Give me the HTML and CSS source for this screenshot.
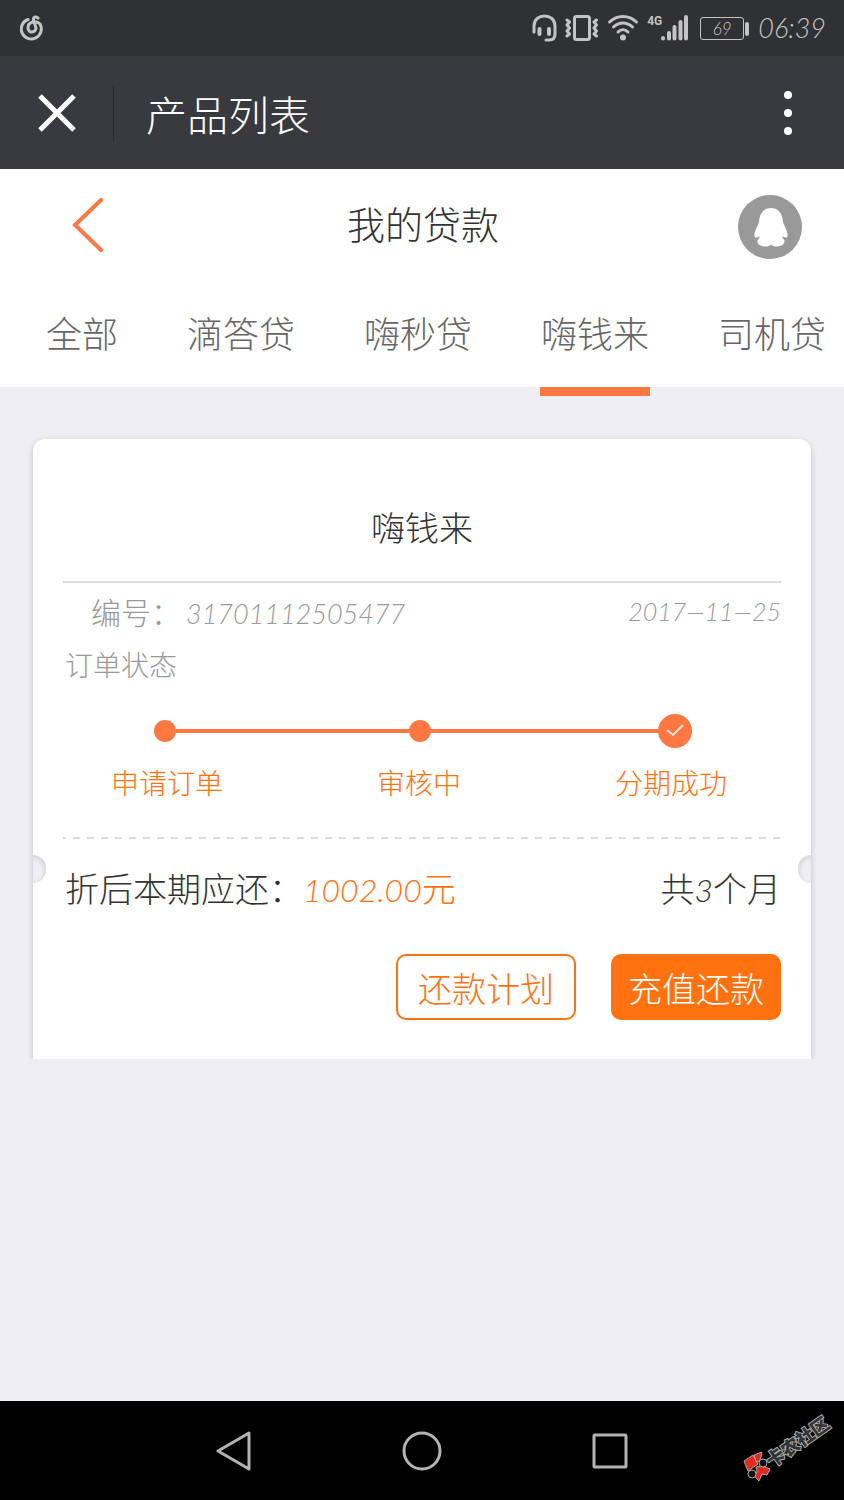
FILE: index.html
```html
<!DOCTYPE html>
<html lang="zh-CN">
<head>
    <meta charset="UTF-8">
    <meta name="viewport" content="width=device-width, initial-scale=1.0">
    <title>产品列表</title>
    <link rel="stylesheet" href="styles.css">
</head>
<body>
    <div class="status-bar">
        <svg class="music" width="24" height="26" viewBox="0 0 24 26" fill="none" stroke="#c4c4c4" stroke-width="3" stroke-linecap="round">
            <path d="M8 4.500A10 10 0 1 0 20 9C17 5.500 8 6 8 13C8 18.500 16 18 16 13L13.500 5C13 2 15.500 1 18 3"/>
        </svg>
        <div class="status-icons">
            <svg width="25" height="28" viewBox="0 0 25 28" fill="none" stroke="#c4c4c4" stroke-linecap="round">
                <path d="M2 18V12C2 -1.500 23 -1.500 23 12V20C23 24 21 26 17 26H14" stroke-width="3"/>
                <path d="M7.500 15V20M17 15V20" stroke-width="4"/>
            </svg>
            <svg width="34" height="28" viewBox="0 0 34 28" fill="none" stroke="#c4c4c4" stroke-linejoin="round" stroke-linecap="round">
                <rect x="9.500" y="2.500" width="15" height="23" rx="2" stroke-width="3"/>
                <path d="M2 6L4.500 8L2 11L4.500 14L2 17L4.500 20L2 22M31.500 6L29 8L31.500 11L29 14L31.500 17L29 20L31.500 22" stroke-width="3"/>
            </svg>
            <svg width="32" height="28" viewBox="0 0 32 28" fill="none" stroke="#c4c4c4" stroke-width="3" stroke-linecap="round">
                <path d="M2.500 8C10 0.500 22 0.500 29.500 8M6.500 13C12 7.500 20 7.500 25.500 13M11 18C14 15 18 15 21 18"/>
                <circle cx="16" cy="23.500" r="3" fill="#c4c4c4" stroke="none"/>
            </svg>
            <div class="signal">
                <span class="network">4G</span>
                <svg width="27" height="28" viewBox="0 0 27 28" stroke="#c4c4c4" stroke-width="4" stroke-linecap="round">
                    <path d="M2 24V24.500M8 19V24.500M13.500 13V24.500M19.500 8V24.500M25 3V24.500"/>
                </svg>
            </div>
            <div class="battery"><span class="battery-level">69</span></div>
            <time class="clock">06:39</time>
        </div>
    </div>

    <div class="app-bar">
        <button class="icon-btn close" aria-label="关闭">
            <svg width="38" height="38" viewBox="0 0 38 38" stroke="#fff" stroke-width="5"><path d="M2 2L36 36M36 2L2 36"/></svg>
        </button>
        <span class="app-title">产品列表</span>
        <button class="icon-btn more" aria-label="更多">
            <svg width="10" height="44" viewBox="0 0 10 44" fill="#fff"><circle cx="5" cy="4" r="4"/><circle cx="5" cy="22" r="4"/><circle cx="5" cy="40" r="4"/></svg>
        </button>
    </div>

    <header class="page-header">
        <div class="title-row">
            <a href="#" class="back" aria-label="返回">
                <svg width="32" height="54" viewBox="0 0 32 54" fill="none" stroke="#ff7842" stroke-width="4" stroke-linecap="round"><path d="M29 2L3 27L29 52"/></svg>
            </a>
            <h1>我的贷款</h1>
            <a href="#" class="avatar" aria-label="客服">
                <svg width="64" height="64" viewBox="0 0 64 64">
                    <circle cx="32" cy="32" r="32" fill="#999"/>
                    <path fill="#fff" d="M33 13C40 13 44.500 18 45 27C46 31 50 36 49.500 41C49 43.500 47.500 42.500 45 41.500C43.500 42 45 43.500 46.500 45C47 49 44 51.500 39 51.500C36 51.500 34.500 51 33 49.500C31.500 51 30 51.500 27 51.500C22 51.500 19 49 19.500 45C21 43.500 22.500 42 21 41.500C18.500 42.500 17 43.500 16.500 41C16 36 20 31 21 27C21.500 18 26 13 33 13Z"/>
                </svg>
            </a>
        </div>
        <nav class="tabs">
            <a href="#">全部</a>
            <a href="#">滴答贷</a>
            <a href="#">嗨秒贷</a>
            <a href="#" class="active">嗨钱来</a>
            <a href="#">司机贷</a>
        </nav>
    </header>

    <main>
        <section class="card">
            <h2>嗨钱来</h2>
            <div class="order-row">
                <p class="order-no">编号：<span class="num">31701112505477</span></p>
                <time class="order-date">2017—11—25</time>
            </div>
            <p class="order-state">订单状态</p>
            <div class="progress">
                <span class="dot"></span>
                <span class="line"></span>
                <span class="dot"></span>
                <span class="line"></span>
                <svg class="done" width="34" height="34" viewBox="0 0 34 34"><circle cx="17" cy="17" r="17" fill="#ff7842"/><path d="M9 16L15 21L25 11" fill="none" stroke="#ffe9df" stroke-width="2"/></svg>
            </div>
            <ol class="steps">
                <li>申请订单</li>
                <li>审核中</li>
                <li>分期成功</li>
            </ol>
            <div class="divider"></div>
            <div class="amount-row">
                <p>折后本期应还：<span class="amount"><span class="num">1002.00</span>元</span></p>
                <p>共<span class="num">3</span>个月</p>
            </div>
            <div class="actions">
                <button class="btn">还款计划</button>
                <button class="btn btn-primary">充值还款</button>
            </div>
        </section>
    </main>

    <div class="nav-bar">
        <button class="icon-btn" aria-label="后退">
            <svg width="40" height="40" viewBox="0 0 40 40" fill="none" stroke="#b3b3b3" stroke-width="3" stroke-linejoin="round"><path d="M35 2V38L4 20Z"/></svg>
        </button>
        <button class="icon-btn" aria-label="主页">
            <svg width="40" height="40" viewBox="0 0 40 40" fill="none" stroke="#b3b3b3" stroke-width="3"><circle cx="20" cy="20" r="18"/></svg>
        </button>
        <button class="icon-btn" aria-label="最近任务">
            <svg width="40" height="40" viewBox="0 0 40 40" fill="none" stroke="#b3b3b3" stroke-width="3"><rect x="4" y="4" width="32" height="32" rx="1"/></svg>
        </button>
        <svg class="watermark" width="104" height="84" viewBox="0 0 104 84">
            <g stroke="#aaa" stroke-width="1">
                <path fill="#e5281e" d="M4 55L13 49L18 58L8 65ZM14 49L22 46L20 55L16 56ZM16 61L22 60L30 63L27 69L22 68L19 75L14 70L17 66Z"/>
                <circle cx="23" cy="57" r="4" fill="#111"/>
                <circle cx="12" cy="68" r="4" fill="#111"/>
            </g>
            <text class="watermark-text" transform="translate(32 62) rotate(-35)">卡农社区</text>
        </svg>
    </div>
</body>
</html>
```
FILE: styles.css
```css
* {
    box-sizing: border-box;
}
body {
    margin: 0;
    min-height: 100vh;
    display: flex;
    flex-direction: column;
    background-color: #efeef4;
    color: #333;
    font-family: "Noto Sans CJK SC", sans-serif;
    font-weight: 300;
}
h1, h2, p, ol {
    margin: 0;
    padding: 0;
    font-weight: 300;
}
a {
    color: inherit;
    text-decoration: none;
}
svg {
    display: block;
}
.icon-btn {
    background: none;
    border: none;
    padding: 0;
    cursor: pointer;
}
.num, .clock, .order-date, .battery-level {
    font-family: Lato, "Noto Sans CJK SC", sans-serif;
    font-style: italic;
}
.num {
    line-height: 1;
}

/* status bar */
.status-bar {
    display: flex;
    justify-content: space-between;
    align-items: center;
    height: 56px;
    padding: 0 18px 0 20px;
    background-color: #303135;
    color: #c4c4c4;
}
.status-icons {
    display: flex;
    align-items: center;
    gap: 8px;
}
.signal {
    display: flex;
    align-items: flex-start;
}
.network {
    margin-right: -1px;
    font-family: Roboto, sans-serif;
    font-size: 12px;
    line-height: 14px;
    font-weight: 700;
}
.battery {
    position: relative;
    width: 44px;
    height: 23px;
    margin: 0 6px 0 4px;
    border: 1px solid #c4c4c4;
    border-radius: 3px;
    text-align: center;
}
.battery::after {
    content: "";
    position: absolute;
    top: 4px;
    right: -6px;
    width: 4px;
    height: 14px;
    border-radius: 2px;
    background-color: #c4c4c4;
}
.battery-level {
    display: block;
    font-size: 17px;
    line-height: 21px;
}
.clock {
    font-size: 27px;
    line-height: 32px;
}

/* app bar */
.app-bar {
    display: flex;
    align-items: center;
    height: 113px;
    padding: 0 51px 0 38px;
    background-color: #393a3f;
    color: #fff;
}
.app-title {
    flex: 1;
    margin-left: 37px;
    padding-left: 32px;
    border-left: 1px solid #2b2c30;
    font-size: 41px;
    line-height: 56px;
}

/* page header */
.page-header {
    background-color: #fff;
}
.title-row {
    display: grid;
    grid-template-columns: 1fr auto 1fr;
    align-items: center;
    height: 112px;
    padding: 0 42px 0 72px;
}
.title-row h1 {
    padding: 0 28px 4px 0;
    font-size: 38px;
    line-height: 48px;
}
.avatar {
    justify-self: end;
    padding-top: 4px;
}
.back {
    justify-self: start;
}
.tabs {
    display: flex;
    gap: 67px;
    padding-left: 45px;
    color: #666;
    font-size: 36px;
    line-height: 102px;
    white-space: nowrap;
}
.tabs a {
    position: relative;
    padding: 0 1px 4px;
}
.tabs .active::after {
    content: "";
    position: absolute;
    left: 0;
    right: 0;
    bottom: -9px;
    height: 9px;
    background-color: #ff7842;
}

/* order card */
main {
    flex: 1;
    padding: 52px 33px;
}
.card {
    position: relative;
    padding: 64px 30px 39px;
    background-color: #fff;
    border-radius: 12px 12px 0 0;
    box-shadow: 0 2px 6px rgba(0, 0, 0, 0.2);
    clip-path: inset(-4px -8px 0 -8px);
}
.card::before, .card::after {
    content: "";
    position: absolute;
    top: 416px;
    width: 13px;
    height: 28px;
    background-color: #efeef4;
}
.card::before {
    left: 0;
    border-radius: 0 14px 14px 0;
    box-shadow: inset -2px 2px 4px rgba(0, 0, 0, 0.1);
}
.card::after {
    right: 0;
    border-radius: 14px 0 0 14px;
    box-shadow: inset 2px 2px 4px rgba(0, 0, 0, 0.1);
}
.card h2 {
    padding-bottom: 30px;
    border-bottom: 2px solid #ddd;
    font-size: 34px;
    line-height: 48px;
    text-align: center;
}
.order-row {
    display: flex;
    justify-content: space-between;
    align-items: center;
    height: 40px;
    margin-top: 8px;
    padding-left: 28px;
    color: #999;
    line-height: 40px;
}
.order-no {
    font-size: 30px;
}
.order-no .num {
    margin-left: 5px;
    font-size: 27px;
}
.order-date {
    font-size: 25px;
}
.order-state {
    margin-top: 13px;
    padding-left: 2px;
    color: #999;
    font-size: 28px;
    line-height: 40px;
}
.progress {
    display: flex;
    align-items: center;
    margin-top: 30px;
    padding: 0 89px 0 91px;
}
.dot {
    width: 22px;
    height: 22px;
    border-radius: 50%;
    background-color: #ff7842;
}
.line {
    flex: 1;
    height: 4px;
    background-color: #ff7842;
}
.done {
    margin-left: -6px;
}
.steps {
    display: flex;
    justify-content: space-between;
    margin-top: 14px;
    padding: 0 54px 0 48px;
    list-style: none;
    color: #ff720f;
    font-size: 28px;
    line-height: 40px;
}
.divider {
    height: 2px;
    margin-top: 35px;
    background: repeating-linear-gradient(90deg, #ddd 0 3px, transparent 3px 10px, #ddd 10px 14px);
}
.amount-row {
    display: flex;
    justify-content: space-between;
    height: 48px;
    margin-top: 25px;
    padding-left: 2px;
    font-size: 34px;
    line-height: 48px;
}
.amount-row .num {
    font-size: 32px;
}
.amount {
    color: #ff720f;
}
.actions {
    display: flex;
    justify-content: flex-end;
    gap: 35px;
    margin-top: 42px;
}
.btn {
    height: 66px;
    padding: 0 20px;
    border: 2px solid #ff720f;
    border-radius: 10px;
    background-color: #fff;
    color: #ff720f;
    font-family: inherit;
    font-size: 34px;
    font-weight: 300;
    cursor: pointer;
}
.btn-primary {
    padding: 0 15px;
    background-color: #ff720f;
    color: #fff;
}

/* system navigation */
.nav-bar {
    position: relative;
    display: flex;
    justify-content: center;
    align-items: center;
    gap: 148px;
    height: 99px;
    background-color: #000;
}
.watermark {
    position: absolute;
    right: 0;
    bottom: 10px;
}
.watermark-text {
    font-size: 18px;
    font-weight: 900;
    fill: #333;
    stroke: #aaa;
    stroke-width: 2px;
    paint-order: stroke;
}
```
